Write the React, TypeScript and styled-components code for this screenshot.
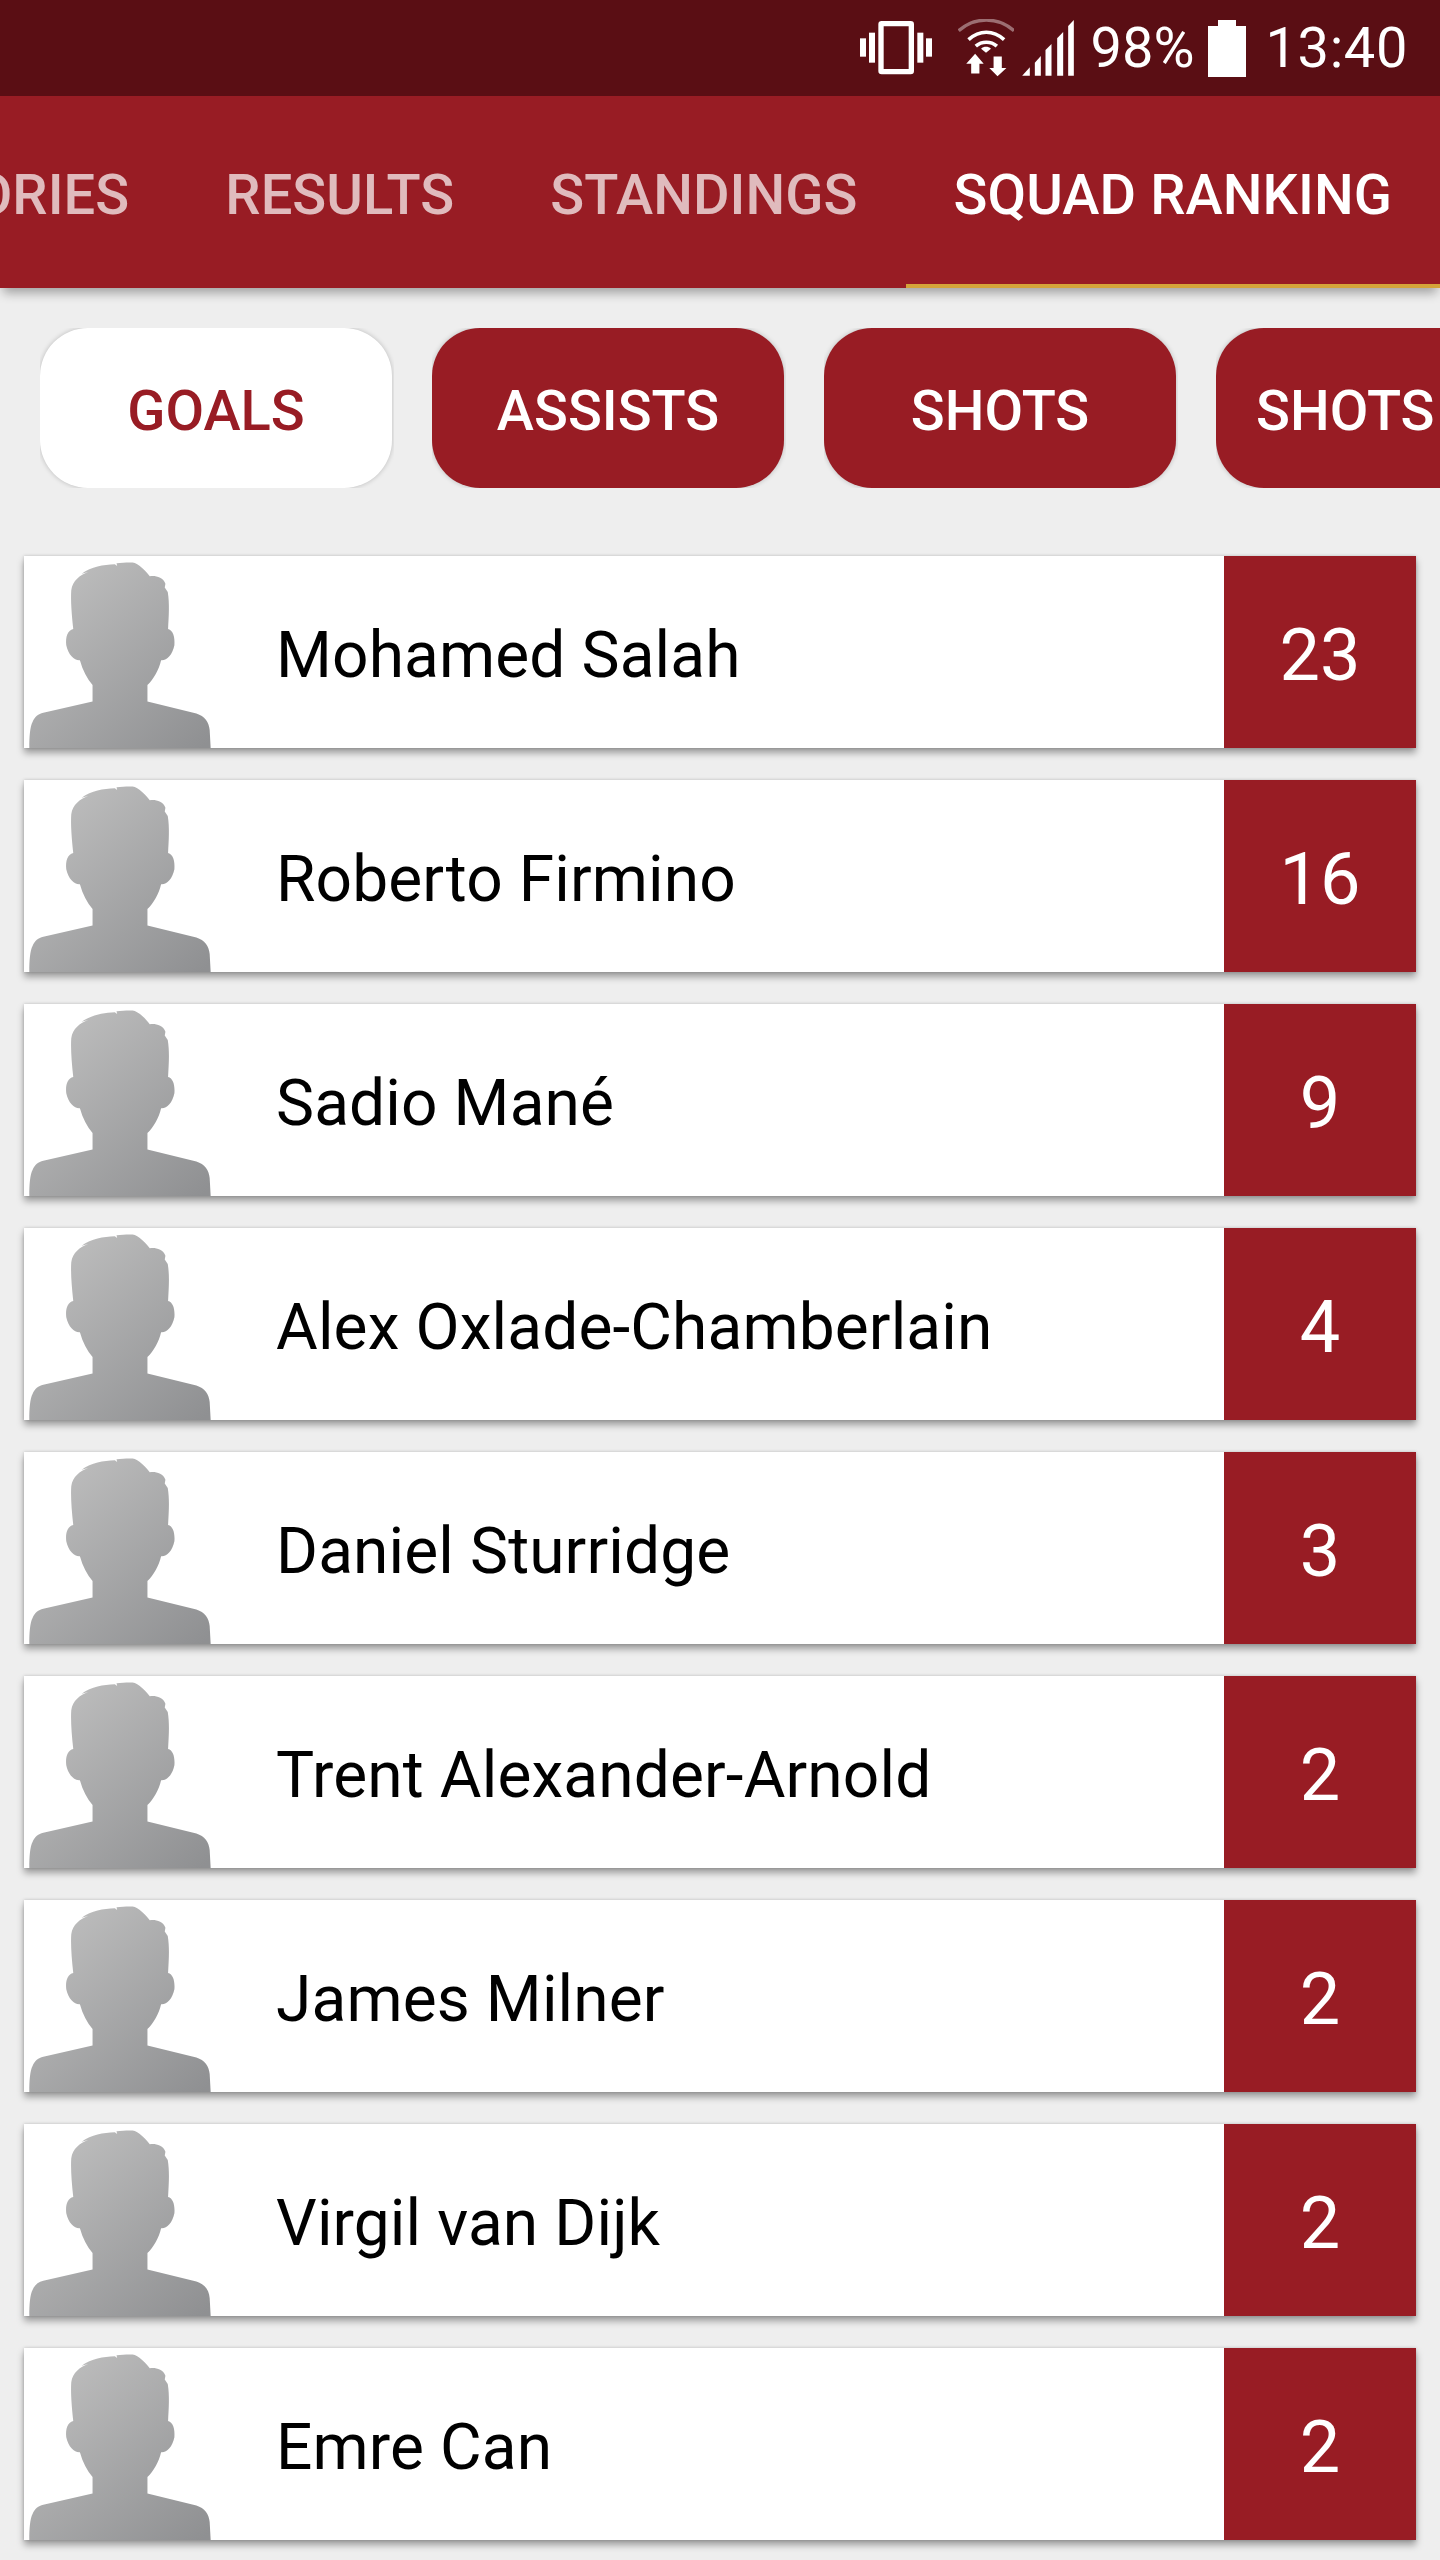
import React from "react";
import styled, { createGlobalStyle } from "styled-components";

const Global = createGlobalStyle`
  html, body { margin: 0; padding: 0; background: #eeeeee; }
  body { font-family: Roboto, "Liberation Sans", sans-serif; }
  #root { width: 1440px; height: 2560px; overflow: hidden; }
`;

const Page = styled.div`
  width: 1440px;
  height: 2560px;
  background: #eeeeee;
  overflow: hidden;
  display: flex;
  flex-direction: column;
`;

const StatusBar = styled.div`
  height: 96px;
  flex: none;
  background: #5a0e14;
  display: flex;
  align-items: center;
  justify-content: flex-end;
  padding-right: 32px;
  color: #fff;
  font-size: 56px;
  line-height: 96px;
`;

const VibrateIcon = styled.svg`
  width: 72px;
  height: 54px;
  flex: none;
  margin-right: 26px;
`;

const WifiIcon = styled.svg`
  width: 56px;
  height: 58px;
  flex: none;
  margin-right: 8px;
`;

const SignalIcon = styled.svg`
  width: 52px;
  height: 56px;
  flex: none;
  margin-right: 17px;
`;

const BatteryIcon = styled.svg`
  width: 38px;
  height: 57px;
  flex: none;
  margin: 0 20px 0 13px;
`;

const StatusText = styled.span<{ $tracked?: boolean }>`
  display: block;
  letter-spacing: ${(p) => (p.$tracked ? "0.6px" : "0")};
`;

const TabBar = styled.div`
  position: relative;
  z-index: 1;
  height: 192px;
  flex: none;
  background: #981c24;
  box-shadow: 0 8px 10px -3px rgba(0, 0, 0, 0.32);
  display: flex;
  justify-content: flex-end;
  overflow: visible;
`;

const Tab = styled.div<{ $active?: boolean }>`
  flex: none;
  box-sizing: border-box;
  height: 192px;
  padding: 10px 48px 0;
  display: flex;
  align-items: center;
  font-size: 56px;
  font-weight: 500;
  letter-spacing: 0.08px;
  color: ${(p) => (p.$active ? "#ffffff" : "rgba(255,255,255,0.7)")};
  border-bottom: 4px solid ${(p) => (p.$active ? "#d4a43a" : "transparent")};
`;

const ChipRow = styled.div`
  flex: none;
  display: flex;
  gap: 40px;
  padding: 40px 0 0 40px;
  overflow: hidden;
  box-sizing: border-box;
  height: 200px;
`;

const Chip = styled.div<{ $active?: boolean }>`
  flex: none;
  box-sizing: border-box;
  min-width: 352px;
  height: 160px;
  padding: 6px 40px 0;
  border-radius: 48px;
  display: flex;
  align-items: center;
  justify-content: center;
  white-space: nowrap;
  font-size: 56px;
  font-weight: 500;
  background: ${(p) => (p.$active ? "#ffffff" : "#981c24")};
  color: ${(p) => (p.$active ? "#981c24" : "#ffffff")};
  box-shadow: 0 0 5px rgba(0, 0, 0, 0.22);
  clip-path: inset(0 -2px 0 0);
`;

const List = styled.div`
  display: flex;
  flex-direction: column;
  gap: 32px;
  padding: 68px 24px 0;
`;

const Row = styled.div`
  flex: none;
  height: 192px;
  display: flex;
  align-items: stretch;
  background: #fff;
  box-shadow: 0 5px 7px rgba(0, 0, 0, 0.35), 0 0 3px rgba(0, 0, 0, 0.18);
`;

const Avatar = styled.svg`
  flex: none;
  align-self: flex-end;
  width: 182px;
  height: 186px;
  margin-left: 5px;
`;

const Name = styled.div`
  flex: 1;
  display: flex;
  align-items: center;
  padding: 6px 0 0 65px;
  font-size: 64px;
  letter-spacing: 0.13px;
  color: #000;
  white-space: nowrap;
`;

const Score = styled.div`
  flex: none;
  width: 192px;
  background: #981c24;
  color: #fff;
  display: flex;
  align-items: center;
  justify-content: center;
  padding-top: 6px;
  box-sizing: border-box;
  font-size: 72px;
`;

const players: [string, number][] = [
  ["Mohamed Salah", 23],
  ["Roberto Firmino", 16],
  ["Sadio Mané", 9],
  ["Alex Oxlade-Chamberlain", 4],
  ["Daniel Sturridge", 3],
  ["Trent Alexander-Arnold", 2],
  ["James Milner", 2],
  ["Virgil van Dijk", 2],
  ["Emre Can", 2],
];

const silhouette =
  "M88 654 C88 620 90 590 98 575 C104 560 115 552 130 548 L278 514 L278 465 C262 445 248 420 240 390 C225 392 205 375 199 345 C196 320 203 300 220 296 C215 250 212 210 214 180 C218 150 240 135 265 125 L245 130 C275 110 310 103 345 102 L352 107 L350 99 C370 97 395 95 405 98 C425 107 440 125 450 138 C465 135 490 140 497 160 L495 172 L504 185 C510 220 507 260 505 296 C520 300 526 320 524 345 C518 375 500 392 484 390 C477 420 462 445 443 465 L443 514 L590 550 C615 558 628 575 630 600 L633 654 Z";

export default function App() {
  return (
    <Page>
      <Global />
      <StatusBar>
        <VibrateIcon viewBox="60 40 216 162" fill="#fff">
          <path fillRule="evenodd" d="M125 40H212Q222 40 222 50V190Q222 200 212 200H125Q115 200 115 190V50Q115 40 125 40ZM131 56V184H206V56Z" />
          <rect x="87" y="75" width="18" height="90" />
          <rect x="60" y="92" width="18" height="55" />
          <rect x="232" y="75" width="18" height="90" />
          <rect x="258" y="92" width="18" height="55" />
        </VibrateIcon>
        <WifiIcon viewBox="350 30 170 175" fill="#fff">
          <path d="M352 65 C400 22 472 22 520 65" fill="none" stroke="#fff" strokeOpacity="0.4" strokeWidth="10" />
          <path d="M382 92 C415 62 457 62 490 92" fill="none" stroke="#fff" strokeWidth="11" />
          <path d="M404 112 C422 96 450 96 468 112" fill="none" stroke="#fff" strokeWidth="11" />
          <path d="M420 120 C428 112 442 112 450 120 L435 132 Z" />
          <path d="M402 135 L428 165 H415 V195 H390 V165 H375 Z" />
          <path d="M458 143 H483 V178 H497 L470 203 L445 178 H458 Z" />
        </WifiIcon>
        <SignalIcon viewBox="547 30 155 168" fill="#fff">
          <path d="M547 197 L570 172 V197 Z" />
          <path d="M585 197 V158 L603 138 V197 Z" />
          <path d="M617 197 V120 L635 102 V197 Z" />
          <path d="M652 197 V85 L670 66 V197 Z" />
          <path d="M685 197 V48 L702 30 V197 Z" />
        </SignalIcon>
        <StatusText>98%</StatusText>
        <BatteryIcon viewBox="0 0 38 57" fill="#fff">
          <path d="M10 0 H28 V6 H38 V57 H0 V6 H10 Z" />
        </BatteryIcon>
        <StatusText $tracked>13:40</StatusText>
      </StatusBar>
      <TabBar>
        <Tab>STORIES</Tab>
        <Tab>RESULTS</Tab>
        <Tab>STANDINGS</Tab>
        <Tab $active>SQUAD RANKING</Tab>
      </TabBar>
      <ChipRow>
        <Chip $active>GOALS</Chip>
        <Chip>ASSISTS</Chip>
        <Chip>SHOTS</Chip>
        <Chip>SHOTS ON TARGET</Chip>
      </ChipRow>
      <List>
        {players.map(([name, score]) => (
          <Row key={name}>
            <Avatar viewBox="88 95 545 559">
              <defs>
                <linearGradient id={`g-${score}-${name.length}`} x1="0.1" y1="0.05" x2="0.95" y2="1">
                  <stop offset="0" stopColor="#bfbfbf" />
                  <stop offset="1" stopColor="#8f9092" />
                </linearGradient>
              </defs>
              <path d={silhouette} fill={`url(#g-${score}-${name.length})`} />
            </Avatar>
            <Name>{name}</Name>
            <Score>{score}</Score>
          </Row>
        ))}
      </List>
    </Page>
  );
}
